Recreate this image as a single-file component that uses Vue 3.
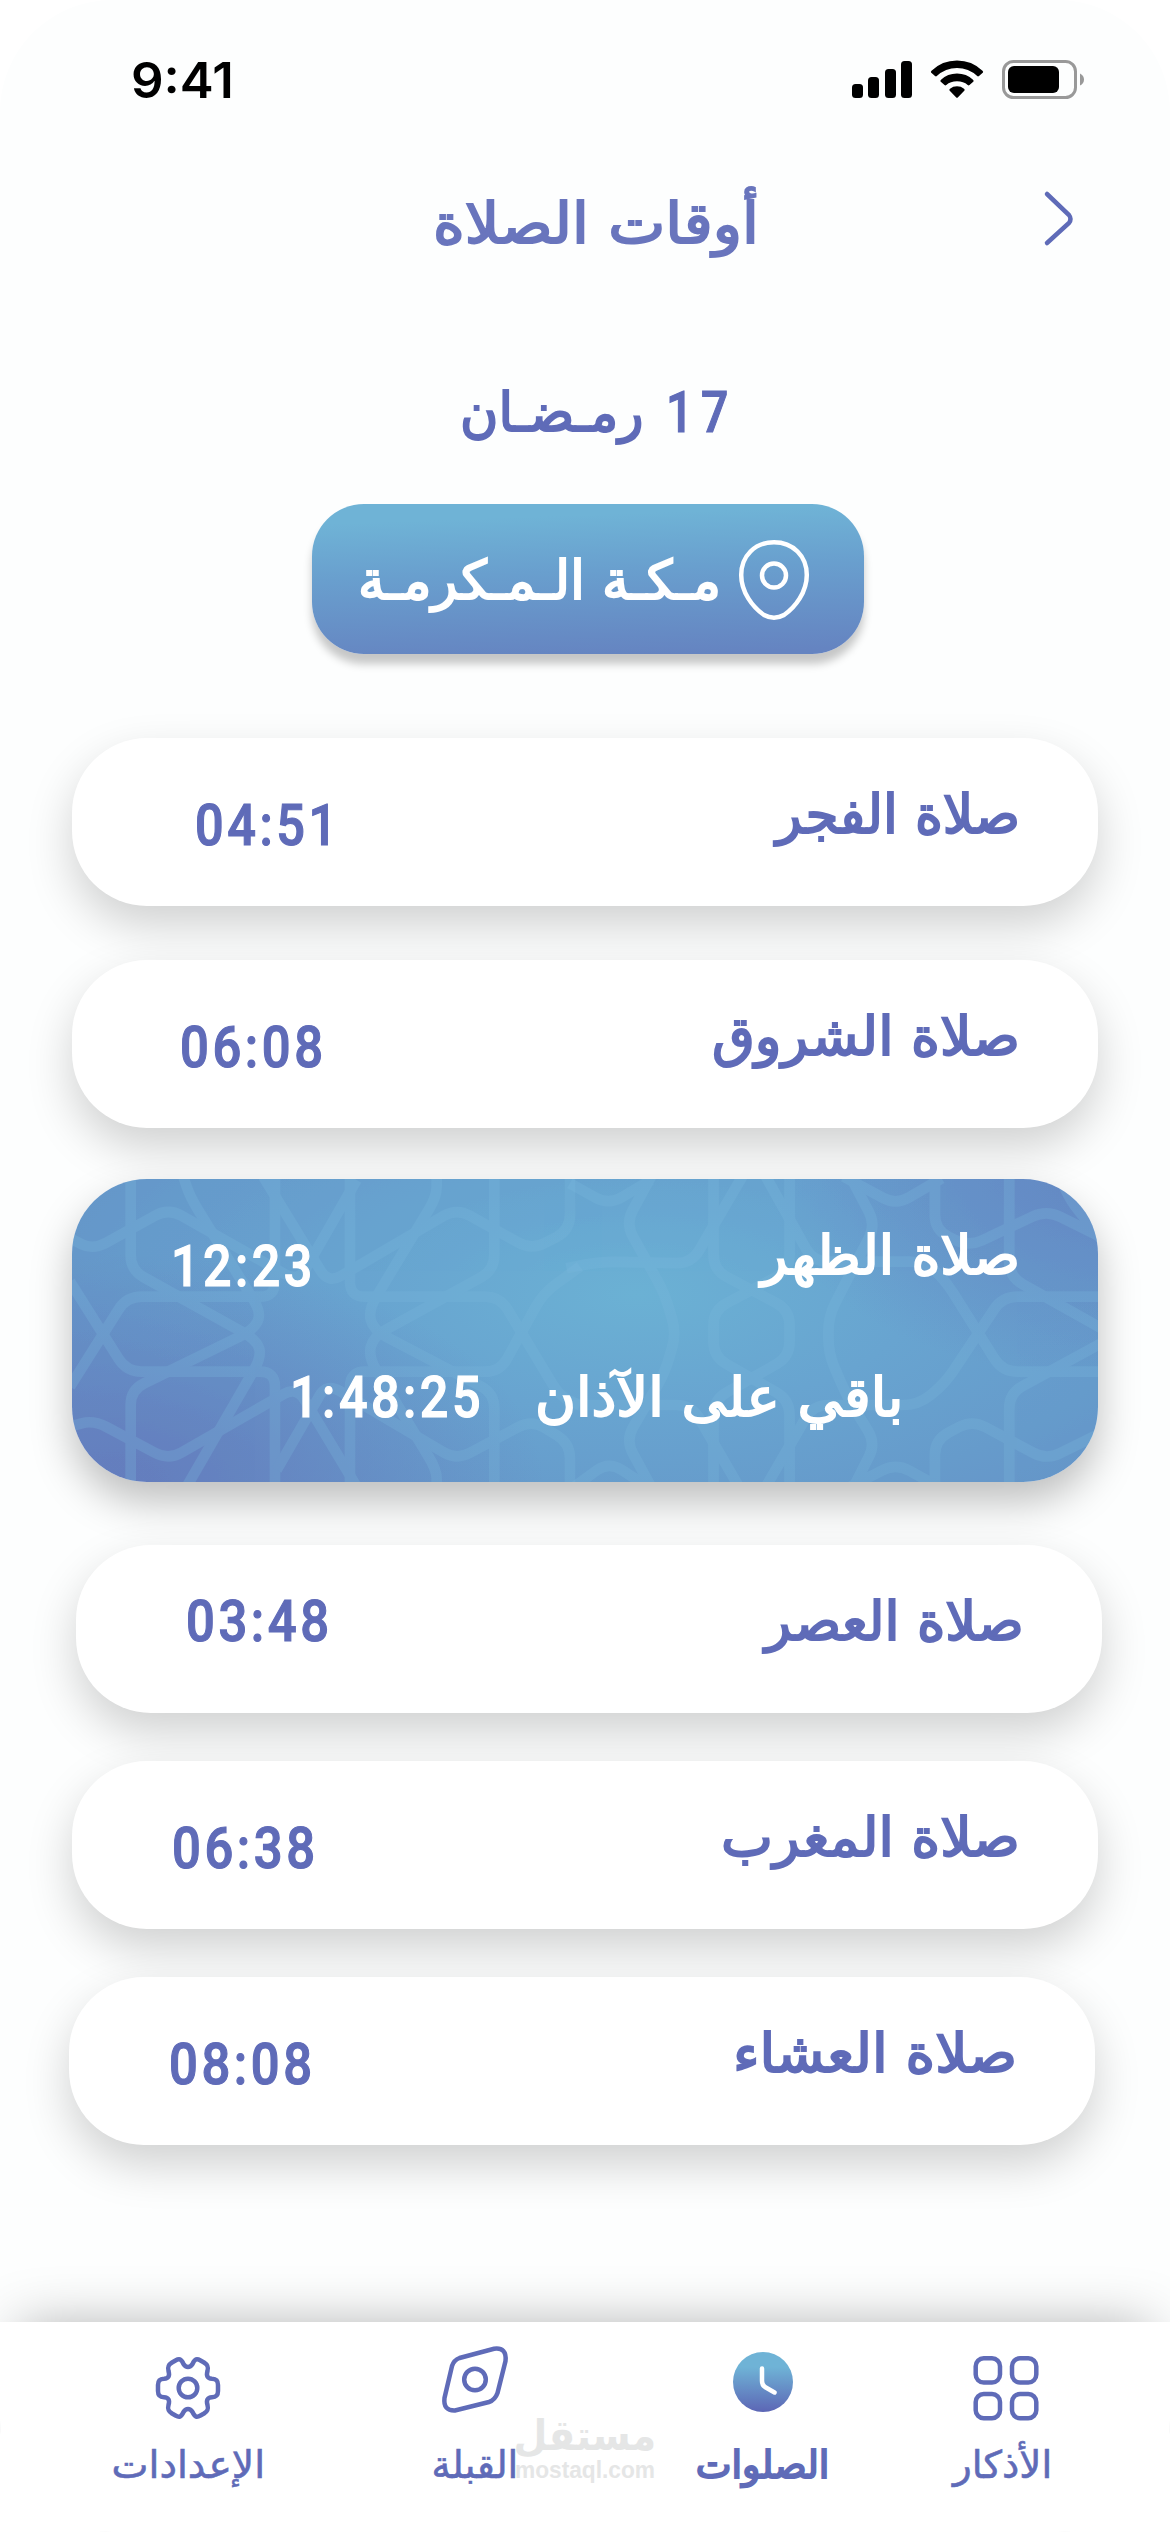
<script setup>
// Scales a label horizontally so that it takes the given width.
const vFit = {
  mounted(el, { value }) {
    el.style.transform = `scaleX(${value / el.offsetWidth})`
  },
}

const before = [
  { id: 'fajr', name: 'صلاة الفجر', nameW: 244, time: '04:51', timeW: 146 },
  { id: 'shuruq', name: 'صلاة الشروق', nameW: 308, time: '06:08', timeW: 147 },
]
const after = [
  { id: 'asr', name: 'صلاة العصر', nameW: 259, time: '03:48', timeW: 147 },
  { id: 'maghrib', name: 'صلاة المغرب', nameW: 299, time: '06:38', timeW: 147 },
  { id: 'isha', name: 'صلاة العشاء', nameW: 284, time: '08:08', timeW: 147 },
]

// Builds a path through the points with softened corners.
function soft(line, r = 30) {
  const p = line.split(' ').map((s) => s.split(',').map(Number))
  let d = `M${p[0]}`
  for (let i = 1; i < p.length - 1; i++) {
    const cut = (q) => {
      const dx = q[0] - p[i][0]
      const dy = q[1] - p[i][1]
      const len = Math.hypot(dx, dy)
      const k = Math.min(r, len / 2) / len
      return [p[i][0] + dx * k, p[i][1] + dy * k]
    }
    d += `L${cut(p[i - 1])}Q${p[i]} ${cut(p[i + 1])}`
  }
  return d + `L${p[p.length - 1]}`
}

const leftLines = [
  '212,20 212,300 590,510 605,560 380,950',
  '370,20 390,80 605,430 580,480 212,660 212,950',
  '30,205 100,240 325,115 715,335 890,30',
  '645,20 645,380 200,380 30,650',
  '30,335 200,605 645,605 645,950',
  '30,770 100,750 325,870 710,650 890,950',
  '610,20 805,340 1190,115 1415,240 1530,180 1530,20',
  '870,20 870,380 1320,380 1500,680 1560,705',
  '1130,20 1130,80 925,420 940,480 1303,670 1303,950',
  '1303,20 1303,300 940,500 925,560 1130,900 1130,950',
  '870,950 870,605 1320,605 1400,460 1450,370 1560,290',
  '650,900 800,640 1190,870 1415,750 1530,820 1530,950',
].map((l) => soft(l, 45))
const rightLines = [
  '-30,40 85,105 210,30',
  '-30,960 85,875 200,950',
  '210,20 135,160 250,370 285,490 250,610 135,810 210,950',
  '395,20 395,300 620,420 620,560 395,690 395,950',
  '620,20 620,300 395,420 395,560 620,690 620,950',
  '480,20 330,280 60,275 -40,295',
  '-20,705 330,705 470,950',
  '550,20 690,275 1020,275 1080,330 1250,605 1560,605',
  '550,950 690,705 1000,705 1080,640 1250,380 1560,380',
  '800,20 875,165 790,330 735,440 735,550 790,680 875,820 810,950',
  '780,20 935,105 1070,25',
  '1050,20 1050,180 1150,230 1380,120 1560,210',
  '1270,20 1270,320 1560,485',
  '1560,510 1270,670 1270,950',
  '1050,950 1050,810 1160,750 1380,870 1560,780',
  '800,950 935,880 1060,950',
  '1420,20 1450,90 1560,230',
].map((l) => soft(l, 45))
</script>

<template>
  <main class="screen" dir="ltr">
    <header class="status">
      <span v-fit="103" class="clock">9:41</span>
      <svg class="status-icons" width="236" height="44" viewBox="0 0 236 44">
        <rect x="2" y="27" width="11" height="14" rx="3.5" />
        <rect x="18" y="20" width="11" height="21" rx="3.5" />
        <rect x="35" y="12" width="11" height="29" rx="3.5" />
        <rect x="51" y="4" width="11" height="37" rx="3.5" />
        <path d="M81 15.500Q80.500 14.800 81.500 13.800Q92 3.500 107 3.500T132.500 13.800Q133.500 14.800 133 15.500L129 19Q128 19.800 127.200 19Q118.500 11 107 11T86.800 19Q86 19.800 85 19Z" />
        <path d="M90.500 24.500Q90 23.800 91 22.800Q97.500 16.500 107 16.500T123 22.800Q124 23.800 123.500 24.500L119.500 28Q118.500 28.800 117.700 28Q113.500 24.300 107 24.300T96.300 28Q95.500 28.800 94.500 28Z" />
        <path d="M99.500 33.500Q99 32.500 100 31.700Q103 29.300 107 29.300T114 31.700Q115 32.500 114.500 33.500L108 40.300Q107 41.300 106 40.300Z" />
        <rect x="153.500" y="4.500" width="72" height="36" rx="10" fill="none" stroke="#999" stroke-width="3" />
        <rect x="158" y="9" width="51" height="27" rx="6" />
        <path d="M230 16.500Q234 18.500 234 22.500T230 28.500Z" fill="#999" />
      </svg>
    </header>

    <section class="title-bar">
      <h1 v-fit="326" dir="rtl" class="ar title">أوقات الصلاة</h1>
      <svg class="back" width="32" height="58" viewBox="0 0 32 58">
        <path d="M4 4L26 25Q29 29 26 33L4 53" fill="none" stroke="#5f6bb8" stroke-width="4.500" stroke-linecap="round" />
      </svg>
    </section>

    <section class="date">
      <span v-fit="184" dir="rtl" class="ar month">رمـضـان</span>
      <span v-fit="70" class="num day">17</span>
    </section>

    <div class="city">
      <span v-fit="363" dir="rtl" class="ar city-name">مـكـة الـمـكرمـة</span>
      <svg class="pin" width="74" height="84" viewBox="0 0 74 84" fill="none" stroke="#fff" stroke-width="4.500">
        <path d="M37 4.200C18 4.200 4.200 18 4.200 37C4.200 54 15.500 69 27 77Q37 82.500 47 77C58.500 69 69.800 54 69.800 37C69.800 18 56 4.200 37 4.200Z" />
        <circle cx="37" cy="37.500" r="12" />
      </svg>
    </div>

    <section class="list">
      <article v-for="p in before" :key="p.id" class="row" :class="p.id">
        <span v-fit="p.timeW" class="num time">{{ p.time }}</span>
        <span v-fit="p.nameW" dir="rtl" class="ar name">{{ p.name }}</span>
      </article>

      <article class="row active">
        <svg class="pattern" width="1026" height="303" viewBox="0 0 1026 303" fill="none" stroke-width="32">
          <g transform="translate(-12 -9) scale(.3333)"><path v-for="d in leftLines" :key="d" :d="d" /></g>
          <g transform="translate(508 -9) scale(.338 .3333)"><path v-for="d in rightLines" :key="d" :d="d" /></g>
        </svg>
        <div class="line">
          <span v-fit="145" class="num time">12:23</span>
          <span v-fit="259" dir="rtl" class="ar name">صلاة الظهر</span>
        </div>
        <div class="line remaining">
          <span v-fit="194" class="num count">1:48:25</span>
          <span v-fit="368" dir="rtl" class="ar left">باقي على الآذان</span>
        </div>
      </article>

      <article v-for="p in after" :key="p.id" class="row" :class="p.id">
        <span v-fit="p.timeW" class="num time">{{ p.time }}</span>
        <span v-fit="p.nameW" dir="rtl" class="ar name">{{ p.name }}</span>
      </article>
    </section>

    <nav class="tabs">
      <a class="tab settings">
        <svg width="70" height="70" viewBox="0 0 70 70" fill="none" stroke="#5f6bb8" stroke-width="4.500" stroke-linejoin="round">
          <path d="M30.500 11C28 5.500 26 5.500 22.500 7.500L19 9.500C15 12 14.500 14 15.500 18C17 23 15.500 25.500 11 25.800C6.500 26 5 28 5 32V38C5 42 6.500 44 11 44.200C15.500 44.500 17 47 15.500 52C14.500 56 15 58 19 60.500L22.500 62.500C26 64.500 28 64.500 30.500 59C33 55 37 55 39.500 59C42 64.500 44 64.500 47.500 62.500L51 60.500C55 58 55.500 56 54.500 52C53 47 54.500 44.500 59 44.200C63.500 44 65 42 65 38V32C65 28 63.500 26 59 25.800C54.500 25.500 53 23 54.500 18C55.500 14 55 12 51 9.500L47.500 7.500C44 5.500 42 5.500 39.500 11C37 15 33 15 30.500 11Z" />
          <circle cx="35" cy="35" r="9.300" />
        </svg>
        <span v-fit="154" dir="rtl" class="ar label">الإعدادات</span>
      </a>
      <a class="tab qibla">
        <svg width="70" height="70" viewBox="0 0 70 70" fill="none" stroke="#5f6bb8" stroke-width="4.500">
          <path d="M19.500 14L54 4.800Q67 3 65.500 17L57.500 49Q55 56 49 58L15 66.500Q3 67 4.500 54L12 22Q14 16 19.500 14Z" />
          <circle cx="35" cy="35.500" r="10.800" />
        </svg>
        <span v-fit="87" dir="rtl" class="ar label">القبلة</span>
      </a>
      <a class="tab prayers">
        <svg width="70" height="70" viewBox="0 0 70 70" fill="none">
          <defs>
            <linearGradient id="dial" x1="0" y1="0" x2="0" y2="1">
              <stop offset=".25" stop-color="#6fb3d6" />
              <stop offset="1" stop-color="#5c66b5" />
            </linearGradient>
          </defs>
          <circle cx="35" cy="35" r="30" fill="url(#dial)" />
          <path d="M34 21.500V34Q34 38 37 40L46.500 45.500" stroke="#fff" stroke-width="4.500" stroke-linecap="round" />
        </svg>
        <span v-fit="134" dir="rtl" class="ar label bold">الصلوات</span>
      </a>
      <a class="tab azkar">
        <svg width="70" height="70" viewBox="0 0 70 70" fill="none" stroke="#5f6bb8" stroke-width="4.500">
          <rect x="4.700" y="5.300" width="24.300" height="24.300" rx="8" />
          <rect x="41" y="5.300" width="24.300" height="24.300" rx="8" />
          <rect x="4.700" y="41" width="24.300" height="24.300" rx="8" />
          <rect x="41" y="41" width="24.300" height="24.300" rx="8" />
        </svg>
        <span v-fit="99" dir="rtl" class="ar label">الأذكار</span>
      </a>
      <div class="watermark">
        <span v-fit="143" dir="rtl" class="wm-ar">مستقل</span>
        <span v-fit="140" class="wm-en">mostaql.com</span>
      </div>
    </nav>
  </main>
</template>

<style>
body {
  margin: 0;
  background: #fff;
}
</style>

<style scoped>
.screen {
  position: relative;
  width: 1170px;
  height: 2532px;
  overflow: hidden;
  display: flex;
  flex-direction: column;
  background: #fdfefe;
  border-radius: 112px;
  color: #5f6bb8;
}
.ar,
.num,
.clock,
.wm-ar,
.wm-en {
  flex: none;
  white-space: pre;
  line-height: 80px;
  height: 80px;
}
.ar {
  font: 400 54px/80px "DejaVu Sans", sans-serif;
  -webkit-text-stroke: 2px currentColor;
  transform-origin: right;
}
.num {
  font: 500 57px/80px Roboto, sans-serif;
  letter-spacing: 4px;
  -webkit-text-stroke: 1.2px currentColor;
  transform-origin: left;
}
.status {
  height: 140px;
  flex: none;
  display: flex;
  justify-content: space-between;
  align-items: flex-start;
  padding: 41px 84px 0 131px;
  box-sizing: border-box;
}
.clock {
  font: 600 49px/80px Inter, sans-serif;
  color: #000;
  transform-origin: left;
}
.status-icons {
  margin-top: 16px;
}
.title-bar {
  flex: none;
  height: 150px;
  display: flex;
  justify-content: flex-end;
  padding: 44px 95px 0 0;
  box-sizing: border-box;
}
.title {
  margin: 0 284px 0 0;
  font-size: 56px;
  color: #6975bd;
}
.back {
  margin-top: 6px;
}
.date {
  flex: none;
  height: 214px;
  display: flex;
  justify-content: flex-end;
  padding: 83px 434px 0 0;
  box-sizing: border-box;
}
.month {
  margin-right: 10px;
}
.day {
  width: auto;
  letter-spacing: 9px;
  transform-origin: right;
}
.city {
  flex: none;
  width: 552px;
  height: 150px;
  margin-left: 312px;
  box-sizing: border-box;
  padding: 34px 53px 0 0;
  display: flex;
  justify-content: flex-end;
  border-radius: 52px;
  background: linear-gradient(178deg, #6fb3d6 12%, #699fce 45%, #6584c1 96%);
  box-shadow: 0 10px 8px rgba(0, 0, 0, 0.22);
  color: #fff;
}
.city-name {
  margin: 3px 16px 0 0;
}
.list {
  flex: none;
  display: flex;
  flex-direction: column;
  margin-top: 84px;
}
.row {
  position: relative;
  width: 1026px;
  height: 168px;
  margin: 0 0 48px 72px;
  box-sizing: border-box;
  padding: 37px 78px 0 108px;
  display: flex;
  justify-content: space-between;
  align-items: flex-start;
  border-radius: 75px;
  background: #fff;
  box-shadow: 0 20px 46px rgba(0, 0, 0, 0.18);
}
.time {
  margin-top: 11px;
}
.fajr {
  margin-bottom: 54px;
  padding-left: 123px;
}
.shuruq {
  margin-bottom: 51px;
}
.asr {
  margin-left: 76px;
  padding-left: 110px;
}
.asr .time {
  margin-top: 0;
}
.maghrib {
  padding-left: 100px;
}
.isha {
  margin-left: 69px;
  padding-left: 100px;
}
.active {
  height: 303px;
  margin-bottom: 63px;
  padding: 37px 78px 0 99px;
  flex-direction: column;
  justify-content: flex-start;
  align-items: stretch;
  overflow: visible;
  color: #fff;
  background:
    radial-gradient(ellipse 42% 75% at 4% 100%, rgba(101, 126, 190, 0.95) 10%, rgba(101, 126, 190, 0) 100%),
    radial-gradient(ellipse 32% 65% at 100% 0%, rgba(101, 136, 196, 0.9) 10%, rgba(101, 136, 196, 0) 100%),
    radial-gradient(ellipse 85% 120% at 55% 38%, #6bb1d4 0%, #68a4d0 32%, #669bcb 58%, #668ec6 90%);
  box-shadow: 0 20px 40px rgba(0, 0, 0, 0.25);
}
.pattern {
  position: absolute;
  left: 0;
  top: 0;
  border-radius: 75px;
  stroke: #7bb8dc;
}
.pattern g {
  opacity: 0.27;
}
.line {
  position: relative;
  display: flex;
  justify-content: space-between;
}
.remaining {
  margin-top: 51px;
  padding: 0 117px 0 119px;
}
.tabs {
  position: relative;
  flex: none;
  height: 210px;
  margin-top: 129px;
  background: #fff;
  box-shadow: 0 -14px 56px -20px rgba(0, 0, 0, 0.34);
  display: grid;
  grid-template-columns: 376px 198px 377px 110px;
}
.tab {
  display: flex;
  flex-direction: column;
  align-items: center;
  padding-top: 31px;
}
.label {
  margin-top: 2px;
  font-size: 38px;
  -webkit-text-stroke: 0.6px currentColor;
  transform-origin: center;
}
.bold {
  -webkit-text-stroke: 2px currentColor;
}
.qibla {
  padding-top: 22px;
}
.qibla .label {
  margin-top: 11px;
}
.prayers {
  padding-top: 25px;
}
.prayers .label {
  margin-top: 8px;
}
.azkar .label {
  margin-left: -6px;
}
.watermark {
  position: absolute;
  left: 485px;
  top: 84px;
  width: 200px;
  display: flex;
  flex-direction: column;
  align-items: center;
  color: #e5e6e6;
}
.wm-ar {
  font: 700 42px/60px "DejaVu Sans", sans-serif;
  height: 44px;
}
.wm-en {
  font: 700 24px/40px "Liberation Sans", sans-serif;
  height: 40px;
}
</style>
